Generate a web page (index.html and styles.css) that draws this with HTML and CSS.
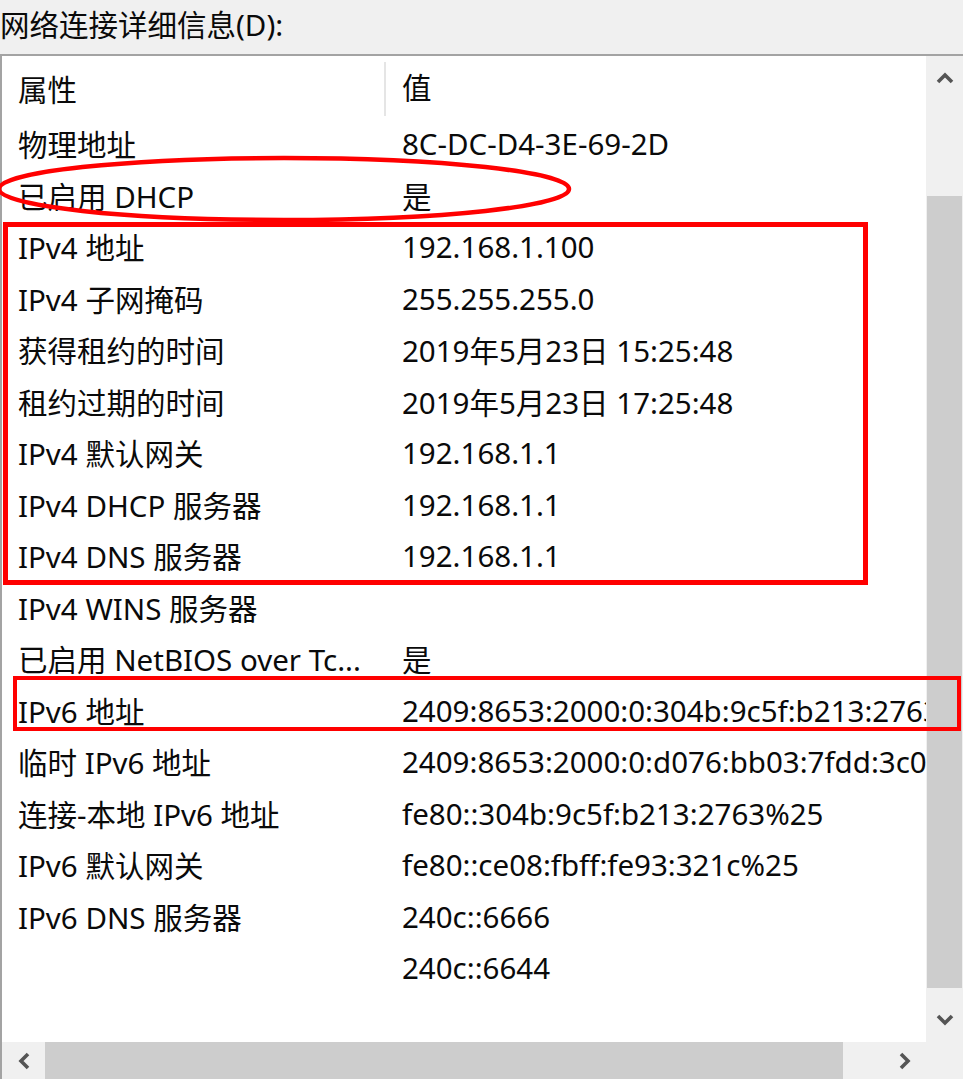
FILE: index.html
```html
<!DOCTYPE html>
<html>
<head>
<meta charset="utf-8">
<title>网络连接详细信息</title>
<link rel="stylesheet" href="styles.css">
</head>
<body>

<div class="caption">网络连接详细信息(D):</div>

<div class="listbox">
  <div class="list">
    <div class="row head">
      <div class="cell prop">属性</div>
      <div class="cell val">值</div>
    </div>
    <div class="row"><div class="cell prop">物理地址</div><div class="cell val">8C-DC-D4-3E-69-2D</div></div>
    <div class="row"><div class="cell prop">已启用 DHCP</div><div class="cell val">是</div></div>
    <div class="row"><div class="cell prop">IPv4 地址</div><div class="cell val">192.168.1.100</div></div>
    <div class="row"><div class="cell prop">IPv4 子网掩码</div><div class="cell val">255.255.255.0</div></div>
    <div class="row"><div class="cell prop">获得租约的时间</div><div class="cell val">2019年5月23日 15:25:48</div></div>
    <div class="row"><div class="cell prop">租约过期的时间</div><div class="cell val">2019年5月23日 17:25:48</div></div>
    <div class="row"><div class="cell prop">IPv4 默认网关</div><div class="cell val">192.168.1.1</div></div>
    <div class="row"><div class="cell prop">IPv4 DHCP 服务器</div><div class="cell val">192.168.1.1</div></div>
    <div class="row"><div class="cell prop">IPv4 DNS 服务器</div><div class="cell val">192.168.1.1</div></div>
    <div class="row"><div class="cell prop">IPv4 WINS 服务器</div><div class="cell val"></div></div>
    <div class="row"><div class="cell prop">已启用 NetBIOS over Tc...</div><div class="cell val">是</div></div>
    <div class="row"><div class="cell prop">IPv6 地址</div><div class="cell val">2409:8653:2000:0:304b:9c5f:b213:2763%25</div></div>
    <div class="row"><div class="cell prop">临时 IPv6 地址</div><div class="cell val">2409:8653:2000:0:d076:bb03:7fdd:3c0e%25</div></div>
    <div class="row"><div class="cell prop">连接-本地 IPv6 地址</div><div class="cell val">fe80::304b:9c5f:b213:2763%25</div></div>
    <div class="row"><div class="cell prop">IPv6 默认网关</div><div class="cell val">fe80::ce08:fbff:fe93:321c%25</div></div>
    <div class="row"><div class="cell prop">IPv6 DNS 服务器</div><div class="cell val">240c::6666</div></div>
    <div class="row"><div class="cell prop"></div><div class="cell val">240c::6644</div></div>
  </div>

  <div class="vscroll">
    <div class="arrow">
      <svg width="18" height="12" viewBox="0 0 18 12"><path d="M2 10 L9 3 L16 10" fill="none" stroke="#555" stroke-width="3.6"/></svg>
    </div>
    <div class="vtrack"><div class="vthumb"></div></div>
    <div class="arrow">
      <svg width="18" height="12" viewBox="0 0 18 12"><path d="M2 2 L9 9 L16 2" fill="none" stroke="#555" stroke-width="3.6"/></svg>
    </div>
  </div>

  <div class="hscroll">
    <div class="harrow">
      <svg width="12" height="18" viewBox="0 0 12 18"><path d="M10 2 L3 9 L10 16" fill="none" stroke="#555" stroke-width="3.6"/></svg>
    </div>
    <div class="htrack"><div class="hthumb"></div></div>
    <div class="harrow">
      <svg width="12" height="18" viewBox="0 0 12 18"><path d="M2 2 L9 9 L2 16" fill="none" stroke="#555" stroke-width="3.6"/></svg>
    </div>
  </div>
  <div class="corner"></div>
</div>

<!-- red marks drawn over the screenshot -->
<svg class="marks" width="963" height="1079">
  <ellipse cx="284" cy="189" rx="285" ry="31" fill="none" stroke="#ff0000" stroke-width="4.5"/>
  <rect x="5.5" y="224.5" width="860" height="358" fill="none" stroke="#ff0000" stroke-width="5"/>
  <rect x="15" y="678" width="944" height="51" fill="none" stroke="#ff0000" stroke-width="4"/>
</svg>

</body>
</html>
```

FILE: styles.css
```css
html, body { margin: 0; padding: 0; }
body {
	position: relative;
	width: 963px;
	height: 1079px;
	overflow: hidden;
	background-color: #f0f0f0;
	font-family: "Noto Sans", "Noto Sans CJK SC", sans-serif;
	font-size: 29.5px;
	color: #0a0a0a;
}

.caption {
	height: 54px;
	line-height: 50px;
	white-space: nowrap;
}

.listbox {
	display: grid;
	grid-template-columns: 1fr 37px;
	grid-template-rows: 986px 37px;
	border-top: 2px solid #a3a3a3;
	border-left: 2px solid #a3a3a3;
}

.list {
	background-color: #fff;
	overflow: hidden;
	position: relative;
}

.row {
	display: grid;
	grid-template-columns: 384px 1fr;
	height: 51.5px;
	align-items: center;
	white-space: nowrap;
}
.row.head { height: 62px; }
.cell { overflow: hidden; }
.cell.prop { padding-left: 16px; }
.cell.val { padding-left: 16px; overflow: visible; }
.head .cell { line-height: 40px; margin-top: 2px; }
.head .cell.prop { border-right: 2px solid #e5e5e5; height: 54px; line-height: 56px; margin-top: 4px; }

.vscroll {
	display: flex;
	flex-direction: column;
	background-color: #f0f0f0;
}
.arrow {
	height: 44px;
	display: flex;
	align-items: center;
	justify-content: center;
}
.vtrack { flex: 1; padding-top: 96px; padding-bottom: 10px; }
.vthumb { height: 100%; margin: 0 1px; background-color: #cdcdcd; }

.hscroll {
	display: flex;
	background-color: #f0f0f0;
}
.harrow {
	width: 43px;
	display: flex;
	align-items: center;
	justify-content: center;
}
.htrack { flex: 1; padding-right: 40px; }
.hthumb { height: 100%; background-color: #cdcdcd; }

.corner { background-color: #f0f0f0; }

.marks {
	position: absolute;
	left: 0;
	top: 0;
	pointer-events: none;
}
```
